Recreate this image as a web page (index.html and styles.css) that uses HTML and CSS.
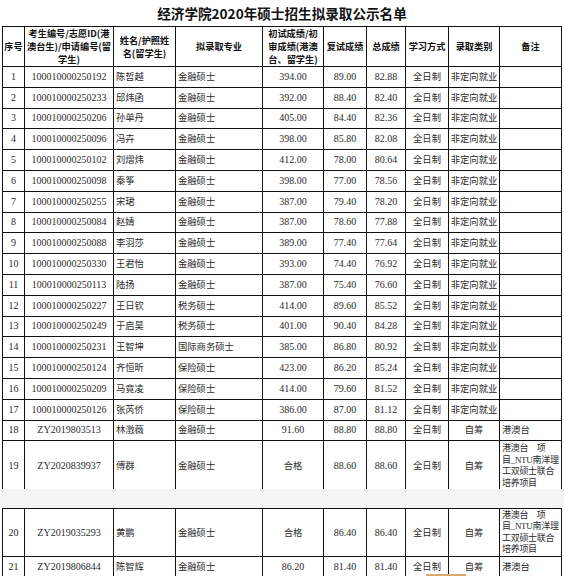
FILE: index.html
```html
<!DOCTYPE html>
<html lang="zh-CN">
<head>
<meta charset="utf-8">
<title>经济学院2020年硕士招生拟录取公示名单</title>
<link rel="stylesheet" href="styles.css">
</head>
<body>
<div class="doc">
  <section class="page page-1">
    <h1 class="title">经济学院2020年硕士招生拟录取公示名单</h1>
    <table class="grid">
      <colgroup>
        <col class="c-no"><col class="c-id"><col class="c-name"><col class="c-major"><col class="c-s1"><col class="c-s2"><col class="c-tot"><col class="c-mode"><col class="c-cat"><col class="c-note">
      </colgroup>
      <thead>
        <tr>
          <th>序号</th>
          <th>考生编号/志愿ID(港<br>澳台生)/申请编号(留<br>学生)</th>
          <th>姓名/护照姓<br>名(留学生)</th>
          <th>拟录取专业</th>
          <th>初试成绩/初<br>审成绩(港澳<br>台、留学生)</th>
          <th>复试成绩</th>
          <th>总成绩</th>
          <th>学习方式</th>
          <th>录取类别</th>
          <th>备注</th>
        </tr>
      </thead>
      <tbody>
        <tr><td>1</td><td>100010000250192</td><td class="tx l">陈哲越</td><td class="tx l">金融硕士</td><td>394.00</td><td>89.00</td><td>82.88</td><td class="tx">全日制</td><td class="tx">非定向就业</td><td></td></tr>
        <tr><td>2</td><td>100010000250233</td><td class="tx l">邱炜函</td><td class="tx l">金融硕士</td><td>392.00</td><td>88.40</td><td>82.40</td><td class="tx">全日制</td><td class="tx">非定向就业</td><td></td></tr>
        <tr><td>3</td><td>100010000250206</td><td class="tx l">孙单丹</td><td class="tx l">金融硕士</td><td>405.00</td><td>84.40</td><td>82.36</td><td class="tx">全日制</td><td class="tx">非定向就业</td><td></td></tr>
        <tr><td>4</td><td>100010000250096</td><td class="tx l">冯卉</td><td class="tx l">金融硕士</td><td>398.00</td><td>85.80</td><td>82.08</td><td class="tx">全日制</td><td class="tx">非定向就业</td><td></td></tr>
        <tr><td>5</td><td>100010000250102</td><td class="tx l">刘熠炜</td><td class="tx l">金融硕士</td><td>412.00</td><td>78.00</td><td>80.64</td><td class="tx">全日制</td><td class="tx">非定向就业</td><td></td></tr>
        <tr><td>6</td><td>100010000250098</td><td class="tx l">秦筝</td><td class="tx l">金融硕士</td><td>398.00</td><td>77.00</td><td>78.56</td><td class="tx">全日制</td><td class="tx">非定向就业</td><td></td></tr>
        <tr><td>7</td><td>100010000250255</td><td class="tx l">宋珺</td><td class="tx l">金融硕士</td><td>387.00</td><td>79.40</td><td>78.20</td><td class="tx">全日制</td><td class="tx">非定向就业</td><td></td></tr>
        <tr><td>8</td><td>100010000250084</td><td class="tx l">赵婧</td><td class="tx l">金融硕士</td><td>387.00</td><td>78.60</td><td>77.88</td><td class="tx">全日制</td><td class="tx">非定向就业</td><td></td></tr>
        <tr><td>9</td><td>100010000250088</td><td class="tx l">李羽莎</td><td class="tx l">金融硕士</td><td>389.00</td><td>77.40</td><td>77.64</td><td class="tx">全日制</td><td class="tx">非定向就业</td><td></td></tr>
        <tr><td>10</td><td>100010000250330</td><td class="tx l">王君怡</td><td class="tx l">金融硕士</td><td>393.00</td><td>74.40</td><td>76.92</td><td class="tx">全日制</td><td class="tx">非定向就业</td><td></td></tr>
        <tr><td>11</td><td>100010000250113</td><td class="tx l">陆扬</td><td class="tx l">金融硕士</td><td>387.00</td><td>75.40</td><td>76.60</td><td class="tx">全日制</td><td class="tx">非定向就业</td><td></td></tr>
        <tr><td>12</td><td>100010000250227</td><td class="tx l">王日钦</td><td class="tx l">税务硕士</td><td>414.00</td><td>89.60</td><td>85.52</td><td class="tx">全日制</td><td class="tx">非定向就业</td><td></td></tr>
        <tr><td>13</td><td>100010000250249</td><td class="tx l">于启昊</td><td class="tx l">税务硕士</td><td>401.00</td><td>90.40</td><td>84.28</td><td class="tx">全日制</td><td class="tx">非定向就业</td><td></td></tr>
        <tr><td>14</td><td>100010000250231</td><td class="tx l">王智坤</td><td class="tx l">国际商务硕士</td><td>385.00</td><td>86.80</td><td>80.92</td><td class="tx">全日制</td><td class="tx">非定向就业</td><td></td></tr>
        <tr><td>15</td><td>100010000250124</td><td class="tx l">齐恒昕</td><td class="tx l">保险硕士</td><td>423.00</td><td>86.20</td><td>85.24</td><td class="tx">全日制</td><td class="tx">非定向就业</td><td></td></tr>
        <tr><td>16</td><td>100010000250209</td><td class="tx l">马竟凌</td><td class="tx l">保险硕士</td><td>414.00</td><td>79.60</td><td>81.52</td><td class="tx">全日制</td><td class="tx">非定向就业</td><td></td></tr>
        <tr><td>17</td><td>100010000250126</td><td class="tx l">张芮侨</td><td class="tx l">保险硕士</td><td>386.00</td><td>87.00</td><td>81.12</td><td class="tx">全日制</td><td class="tx">非定向就业</td><td></td></tr>
        <tr><td>18</td><td>ZY2019803513</td><td class="tx l">林澂薇</td><td class="tx l">金融硕士</td><td>91.60</td><td>88.80</td><td>88.80</td><td class="tx">全日制</td><td class="tx">自筹</td><td class="tx l">港澳台</td></tr>
        <tr class="tall cut"><td>19</td><td>ZY2020839937</td><td class="tx l">傅群</td><td class="tx l">金融硕士</td><td class="tx">合格</td><td>88.60</td><td>88.60</td><td class="tx">全日制</td><td class="tx">自筹</td><td class="tx l note"><span class="ln">港澳台&#12288;项</span><span class="ln">目_NTU南洋理</span><span class="ln">工双硕士联合</span><span class="ln">培养项目</span></td></tr>
      </tbody>
    </table>
  </section>
  <div class="page-gap"></div>
  <section class="page page-2">
    <table class="grid">
      <colgroup>
        <col class="c-no"><col class="c-id"><col class="c-name"><col class="c-major"><col class="c-s1"><col class="c-s2"><col class="c-tot"><col class="c-mode"><col class="c-cat"><col class="c-note">
      </colgroup>
      <tbody>
        <tr class="tall"><td>20</td><td>ZY2019035293</td><td class="tx l">黄鹏</td><td class="tx l">金融硕士</td><td class="tx">合格</td><td>86.40</td><td>86.40</td><td class="tx">全日制</td><td class="tx">自筹</td><td class="tx l note"><span class="ln">港澳台&#12288;项</span><span class="ln">目_NTU南洋理</span><span class="ln">工双硕士联合</span><span class="ln">培养项目</span></td></tr>
        <tr><td>21</td><td>ZY2019806844</td><td class="tx l">陈智辉</td><td class="tx l">金融硕士</td><td>86.20</td><td>81.40</td><td>81.40</td><td class="tx">全日制</td><td class="tx">自筹</td><td class="tx l">港澳台</td></tr>
      </tbody>
    </table>
  </section>
</div>
<div class="scrap"></div>
</body>
</html>
```

FILE: styles.css
```css
html, body {
  margin: 0;
  padding: 0;
  background: #fff;
}

body {
  width: 564px;
  height: 576px;
  overflow: hidden;
  position: relative;
  font-family: "Liberation Serif", "Noto Sans CJK SC", serif;
  color: #2b2b2b;
}

.page {
  background: #fff;
  overflow: hidden;
}

.page-1 {
  height: 489px;
}

.page-gap {
  height: 19px;
  background: #f5f5f5;
}

.page-2 {
  height: 68px;
}

.title {
  margin: 0;
  height: 26px;
  font: 700 13.6px/26px "Noto Sans CJK SC", sans-serif;
  text-align: center;
  color: #111;
}

.grid {
  border-collapse: collapse;
  table-layout: fixed;
  width: 560px;
  margin-left: 2px;
}

.c-no { width: 22px; }
.c-id { width: 89px; }
.c-name { width: 62px; }
.c-major { width: 87px; }
.c-s1 { width: 61px; }
.c-s2 { width: 43px; }
.c-tot { width: 39px; }
.c-mode { width: 43px; }
.c-cat { width: 51px; }
.c-note { width: 62px; }

.grid th,
.grid td {
  border: 1px solid #111;
  padding: 0;
  vertical-align: middle;
  text-align: center;
  white-space: nowrap;
  overflow: hidden;
}

.grid th {
  height: 39px;
  font: 700 9.2px/13px "Noto Sans CJK SC", sans-serif;
  color: #111;
}

.grid td {
  height: 19.8px;
  font-size: 10px;
  line-height: 12px;
}

.grid .tx {
  font-size: 9.3px;
}

.grid .l {
  text-align: left;
  padding-left: 2px;
}

.grid tr.tall td {
  height: 47px;
}

.grid tr.cut td {
  height: 50px;
  padding-bottom: 2px;
}

.grid .note {
  font-size: 9px;
  letter-spacing: -0.3px;
}

.note .ln {
  display: block;
  line-height: 11.5px;
}

.scrap {
  position: absolute;
  left: 426px;
  top: 574px;
  width: 40px;
  height: 2px;
  background: #d9a86c;
}
```
